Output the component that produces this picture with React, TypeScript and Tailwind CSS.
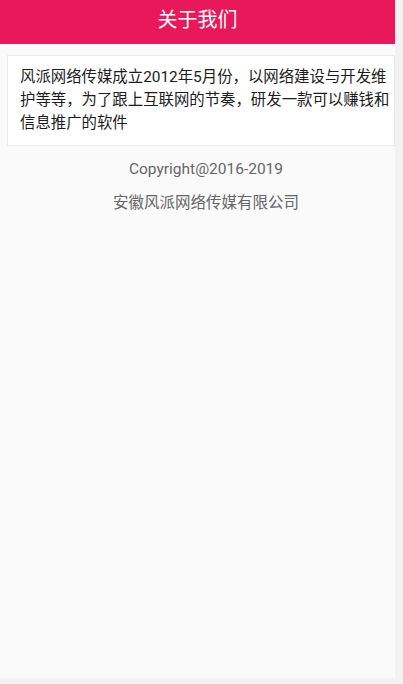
export default function App() {
  return (
    <div className="min-h-[684px] w-[403px] bg-[#f2f2f2] font-['Roboto','Noto_Sans_CJK_SC',sans-serif]">
      <div className="h-[678px] w-[395px] bg-[#fafafa]">
        <header className="flex h-[44px] items-center justify-center bg-[#e8185a] pb-[5px]">
          <h1 className="text-[20px] text-white">关于我们</h1>
        </header>
        <div className="ml-[7px] mt-[11px] border border-[#ececec] bg-white py-[10px] pl-[12px] pr-[2px]">
          <p className="text-[15.4px] leading-[23px] text-[#1c1c1c]">
            风派网络传媒成立2012年5月份，以网络建设与开发维护等等，为了跟上互联网的节奏，研发一款可以赚钱和信息推广的软件
          </p>
        </div>
        <div className="mt-[12px] flex flex-col items-center gap-[11px] pl-[17px] text-[15.5px] leading-[23px] text-[#666]">
          <p>Copyright@2016-2019</p>
          <p>安徽风派网络传媒有限公司</p>
        </div>
      </div>
    </div>
  )
}
